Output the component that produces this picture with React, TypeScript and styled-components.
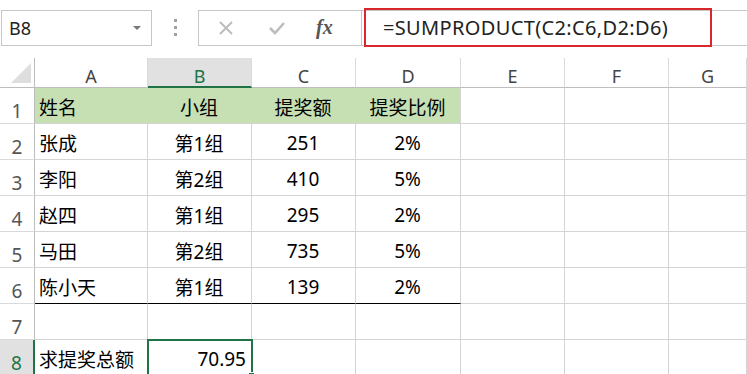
import styled, { createGlobalStyle, css } from 'styled-components';

const Global = createGlobalStyle`
  html, body {
    margin: 0;
    padding: 0;
    background: #fff;
    overflow: hidden;
  }
  body {
    font-family: 'Noto Sans', 'Noto Sans CJK SC', sans-serif;
  }
`;

const Page = styled.div`
  width: 747px;
  height: 374px;
  overflow: hidden;
  display: flex;
  flex-direction: column;
`;

const TopBar = styled.div`
  height: 58px;
  flex-shrink: 0;
  display: flex;
  align-items: center;
  padding-left: 1px;
  padding-bottom: 3px;
  box-sizing: border-box;
`;

const NameBox = styled.div`
  width: 151px;
  height: 36px;
  box-sizing: border-box;
  border: 1px solid #c6c6c6;
  display: flex;
  align-items: center;
  justify-content: space-between;
  padding: 0 10px 0 7px;
  font-size: 18px;
  color: #222;
`;

const Caret = styled.span`
  width: 0;
  height: 0;
  border-left: 4px solid transparent;
  border-right: 4px solid transparent;
  border-top: 4px solid #777;
`;

const Dots = styled.div`
  width: 46px;
  display: flex;
  flex-direction: column;
  align-items: center;
  gap: 4px;
  span {
    width: 3px;
    height: 3px;
    background: #a0a0a0;
  }
`;

const Buttons = styled.div`
  width: 164px;
  height: 36px;
  box-sizing: border-box;
  border: 1px solid #c6c6c6;
  display: flex;
  align-items: center;
  padding-left: 19px;
  gap: 34px;
`;

const Fx = styled.span`
  font-family: 'Liberation Serif', 'DejaVu Serif', serif;
  font-style: italic;
  font-weight: bold;
  font-size: 20px;
  color: #555;
  margin-left: -4px;
`;

const FormulaBox = styled.div`
  flex: 1;
  height: 36px;
  box-sizing: border-box;
  border-top: 1px solid #c6c6c6;
  border-bottom: 1px solid #c6c6c6;
  display: flex;
  align-items: center;
  padding-left: 2px;
`;

const Highlight = styled.div`
  width: 348px;
  height: 39px;
  flex-shrink: 0;
  box-sizing: border-box;
  border: 2px solid #d8282e;
  display: flex;
  align-items: center;
  padding-left: 17px;
  font-size: 20px;
  color: #222;
  letter-spacing: 0.35px;
`;

const Sheet = styled.div`
  display: grid;
  grid-template-columns: 35px 113px 104px 104px 105px 104px 104px 1fr;
  grid-template-rows: 30px repeat(8, 36px);
`;

const Corner = styled.div`
  border-bottom: 1px solid #bdbdbd;
  border-right: 1px solid #bdbdbd;
  display: flex;
  align-items: flex-end;
  justify-content: flex-end;
  padding: 0 3px 4px 0;
`;

const ColHead = styled.div<{ $selected?: boolean }>`
  border-right: 1px solid #dadada;
  border-bottom: 1px solid #bdbdbd;
  display: flex;
  align-items: center;
  justify-content: center;
  padding-top: 7px;
  font-size: 18px;
  color: #444;
  ${(p) =>
    p.$selected &&
    css`
      background: #e1e1e1;
      border-bottom: 2px solid #217346;
      color: #217346;
    `}
`;

const RowHead = styled.div<{ $selected?: boolean }>`
  border-right: 1px solid #bdbdbd;
  border-bottom: 1px solid #dadada;
  display: flex;
  align-items: center;
  justify-content: center;
  padding-top: 11px;
  font-size: 19px;
  color: #555;
  ${(p) =>
    p.$selected &&
    css`
      background: #e1e1e1;
      border-right: 2px solid #217346;
      color: #217346;
    `}
`;

const Cell = styled.div<{
  $align?: 'left' | 'center' | 'right';
  $fill?: boolean;
  $rule?: boolean;
  $active?: boolean;
}>`
  position: relative;
  border-right: 1px solid #d4d4d4;
  border-bottom: 1px solid ${(p) => (p.$rule ? '#000' : '#d4d4d4')};
  background: ${(p) => (p.$fill ? '#c6e0b4' : '#fff')};
  display: flex;
  align-items: center;
  justify-content: ${(p) =>
    p.$align === 'center' ? 'center' : p.$align === 'right' ? 'flex-end' : 'flex-start'};
  padding: 2px 5px 0 4px;
  font-size: 19px;
  color: #000;
  white-space: nowrap;
  ${(p) =>
    p.$active &&
    css`
      outline: 2px solid #217346;
      outline-offset: -1px;
      z-index: 1;
      &::after {
        content: '';
        position: absolute;
        right: -4px;
        bottom: -4px;
        width: 5px;
        height: 5px;
        background: #217346;
        border: 1px solid #fff;
      }
    `}
`;

const cols = ['A', 'B', 'C', 'D', 'E', 'F', 'G'];

const rows = [
  ['姓名', '小组', '提奖额', '提奖比例'],
  ['张成', '第1组', '251', '2%'],
  ['李阳', '第2组', '410', '5%'],
  ['赵四', '第1组', '295', '2%'],
  ['马田', '第2组', '735', '5%'],
  ['陈小天', '第1组', '139', '2%'],
  ['', '', '', ''],
  ['求提奖总额', '70.95', '', ''],
];

function App() {
  return (
    <Page>
      <Global />
      <TopBar>
        <NameBox>
          B8
          <Caret />
        </NameBox>
        <Dots>
          <span />
          <span />
          <span />
        </Dots>
        <Buttons>
          <svg width="16" height="16" viewBox="0 0 16 16">
            <path d="M2 2 L14 14 M14 2 L2 14" stroke="#bdbdbd" strokeWidth="2" fill="none" />
          </svg>
          <svg width="18" height="16" viewBox="0 0 18 16">
            <path d="M2 8 L7 13 L16 3" stroke="#bdbdbd" strokeWidth="2.6" fill="none" />
          </svg>
          <Fx>fx</Fx>
        </Buttons>
        <FormulaBox>
          <Highlight>=SUMPRODUCT(C2:C6,D2:D6)</Highlight>
        </FormulaBox>
      </TopBar>
      <Sheet>
        <Corner>
          <svg width="20" height="20" viewBox="0 0 20 20">
            <path d="M20 0 L20 20 L0 20 Z" fill="#dedede" />
          </svg>
        </Corner>
        {cols.map((c) => (
          <ColHead key={c} $selected={c === 'B'}>
            {c}
          </ColHead>
        ))}
        {rows.map((r, i) => {
          const n = i + 1;
          return [
            <RowHead key={`h${n}`} $selected={n === 8}>
              {n}
            </RowHead>,
            ...cols.map((c, j) => {
              const text = j < 4 ? r[j] : '';
              const align =
                j === 0 ? 'left' : n === 8 && j === 1 ? 'right' : 'center';
              return (
                <Cell
                  key={`${c}${n}`}
                  $align={align}
                  $fill={n === 1 && j < 4}
                  $rule={n === 6 && j < 4}
                  $active={n === 8 && j === 1}
                >
                  {text}
                </Cell>
              );
            }),
          ];
        })}
      </Sheet>
    </Page>
  );
}

export default App;
